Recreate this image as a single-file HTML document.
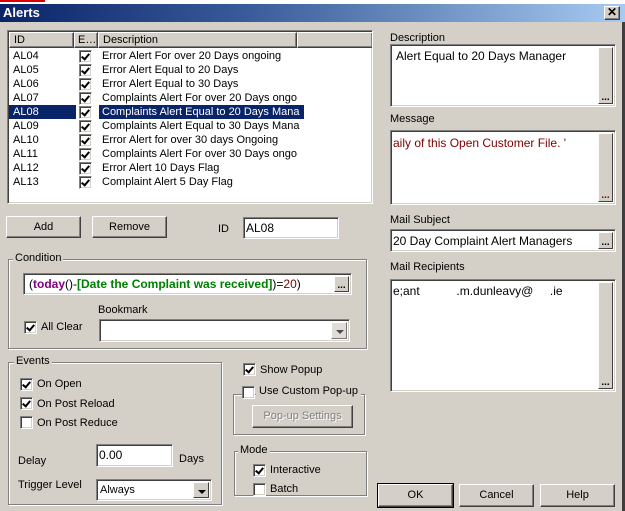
<!DOCTYPE html>
<html><head><style>
*{box-sizing:border-box}
body{margin:0;width:625px;height:511px;background:#d4d0c8;font-family:"Liberation Sans",sans-serif;font-size:11px;color:#000;position:relative;overflow:hidden}
.a{position:absolute}
.sunk{background:#fff;border:1px solid;border-color:#808080 #fff #fff #808080;box-shadow:inset 1px 1px 0 #404040,inset -1px -1px 0 #d4d0c8}
.btn{background:#d4d0c8;border:1px solid;border-color:#fff #404040 #404040 #fff;box-shadow:inset -1px -1px 0 #808080;text-align:center}
.grp{border:1px solid #808080;box-shadow:1px 1px 0 #fff,inset 1px 1px 0 #fff}
.lg{background:#d4d0c8;padding:0 2px;position:absolute;top:-8px;left:6px}
.cb{width:13px;height:13px;background:#fff;border:1px solid;border-color:#808080 #fff #fff #808080;box-shadow:inset 1px 1px 0 #404040,inset -1px -1px 0 #d4d0c8;position:absolute}
.cb.on::after{content:"";position:absolute;left:3px;top:1px;width:3px;height:6px;border:solid #000;border-width:0 2px 2px 0;transform:rotate(40deg)}
.dots{position:absolute;right:2px;top:2px;bottom:2px;width:15px;background:#d4d0c8;border:1px solid;border-color:#fff #404040 #404040 #fff;font-weight:bold;font-size:10px;text-align:center;display:flex;align-items:flex-end;justify-content:center;line-height:8px;padding-bottom:1px}
.row{position:absolute;left:0;height:14px;line-height:14px;width:364px}
.arrow{position:absolute;right:2px;top:2px;bottom:2px;width:16px;background:#d4d0c8;border:1px solid;border-color:#fff #404040 #404040 #fff}
.arrow::after{content:"";position:absolute;left:4px;top:7px;border:4px solid transparent;border-top:4px solid #000;border-bottom:0}
.txt{font-family:"Liberation Sans",sans-serif;font-size:12px}
</style></head><body>
<div class="a" style="left:0;top:0;width:625px;height:4px;background:#fff"></div>
<div class="a" style="left:0;top:0;width:45px;height:2px;background:#d00"></div>
<div class="a" style="left:0;top:4px;width:625px;height:18px;background:linear-gradient(90deg,#0a246a 0%,#3a5c9a 40%,#a6caf0 100%);color:#fff;font-weight:bold;font-size:13px;line-height:18px;padding-left:3px">Alerts</div>
<div class="a btn" style="left:604px;top:6px;width:16px;height:14px;font-weight:bold;font-size:12px;line-height:11px">✕</div>
<div class="a" style="left:622px;top:22px;width:3px;height:489px;background:#404040"></div>

<!-- list -->
<div class="a sunk" style="left:7px;top:30px;width:366px;height:174px;overflow:hidden">
 <div class="a" style="left:1px;top:1px;width:364px;height:16px;background:#d4d0c8">
  <div class="a btn" style="left:0;top:0;width:65px;height:16px;text-align:left;padding-left:4px;line-height:14px">ID</div>
  <div class="a btn" style="left:65px;top:0;width:24px;height:16px;text-align:left;padding-left:3px;line-height:14px">E…</div>
  <div class="a btn" style="left:89px;top:0;width:199px;height:16px;text-align:left;padding-left:4px;line-height:14px">Description</div>
  <div class="a btn" style="left:288px;top:0;width:76px;height:16px"></div>
 </div>
 <div class="a" style="left:1px;top:18px;width:364px;height:155px">
  <div class="row" style="top:0"><span class="a" style="left:4px">AL04</span><span class="cb on" style="left:70px;top:1px"></span><span class="a" style="left:93px">Error Alert For over 20 Days ongoing</span></div>
  <div class="row" style="top:14px"><span class="a" style="left:4px">AL05</span><span class="cb on" style="left:70px;top:1px"></span><span class="a" style="left:93px">Error Alert Equal to 20 Days</span></div>
  <div class="row" style="top:28px"><span class="a" style="left:4px">AL06</span><span class="cb on" style="left:70px;top:1px"></span><span class="a" style="left:93px">Error Alert Equal to 30 Days</span></div>
  <div class="row" style="top:42px"><span class="a" style="left:4px">AL07</span><span class="cb on" style="left:70px;top:1px"></span><span class="a" style="left:93px">Complaints Alert For over 20 Days ongo</span></div>
  <div class="row" style="top:56px"><span class="a" style="left:0;width:67px;height:14px;background:#0a246a;color:#fff;padding-left:4px">AL08</span><span class="cb on" style="left:70px;top:1px"></span><span class="a" style="left:90px;width:205px;height:14px;background:#0a246a;color:#fff;padding-left:3px">Complaints Alert Equal to 20 Days Mana</span></div>
  <div class="row" style="top:70px"><span class="a" style="left:4px">AL09</span><span class="cb on" style="left:70px;top:1px"></span><span class="a" style="left:93px">Complaints Alert Equal to 30 Days Mana</span></div>
  <div class="row" style="top:84px"><span class="a" style="left:4px">AL10</span><span class="cb on" style="left:70px;top:1px"></span><span class="a" style="left:93px">Error Alert for over 30 days Ongoing</span></div>
  <div class="row" style="top:98px"><span class="a" style="left:4px">AL11</span><span class="cb on" style="left:70px;top:1px"></span><span class="a" style="left:93px">Complaints Alert For over 30 Days ongo</span></div>
  <div class="row" style="top:112px"><span class="a" style="left:4px">AL12</span><span class="cb on" style="left:70px;top:1px"></span><span class="a" style="left:93px">Error Alert 10 Days Flag</span></div>
  <div class="row" style="top:126px"><span class="a" style="left:4px">AL13</span><span class="cb on" style="left:70px;top:1px"></span><span class="a" style="left:93px">Complaint Alert 5 Day Flag</span></div>
 </div>
</div>

<div class="a btn" style="left:6px;top:216px;width:75px;height:22px;line-height:20px">Add</div>
<div class="a btn" style="left:92px;top:216px;width:75px;height:22px;line-height:20px">Remove</div>
<div class="a" style="left:218px;top:223px">ID</div>
<div class="a sunk" style="left:243px;top:217px;width:96px;height:22px;padding:3px 0 0 2px;font-size:12px">AL08</div>

<!-- condition -->
<div class="a grp" style="left:8px;top:259px;width:359px;height:90px"><span class="lg" style="left:4px">Condition</span></div>
<div class="a sunk" style="left:23px;top:273px;width:329px;height:22px;padding:3px 0 0 5px;font-size:12px"><span>(</span><b style="color:#800080">today</b><span>()-</span><b style="color:#008000">[Date the Complaint was received]</b><span>)=</span><span style="color:#800000">20</span><span>)</span><div class="dots" style="top:2px">...</div></div>
<div class="a" style="left:98px;top:304px">Bookmark</div>
<div class="a sunk" style="left:99px;top:319px;width:251px;height:23px"><div class="arrow" style="opacity:.7"></div></div>
<span class="cb on" style="left:24px;top:321px"></span>
<div class="a" style="left:41px;top:321px">All Clear</div>

<!-- events -->
<div class="a grp" style="left:8px;top:362px;width:214px;height:143px"><span class="lg" style="left:5px">Events</span></div>
<span class="cb on" style="left:20px;top:378px"></span><div class="a" style="left:37px;top:378px">On Open</div>
<span class="cb on" style="left:20px;top:397px"></span><div class="a" style="left:37px;top:398px">On Post Reload</div>
<span class="cb" style="left:20px;top:416px"></span><div class="a" style="left:37px;top:417px">On Post Reduce</div>
<div class="a" style="left:18px;top:455px">Delay</div>
<div class="a sunk" style="left:96px;top:444px;width:77px;height:23px;padding:3px 0 0 2px;font-size:12px">0.00</div>
<div class="a" style="left:179px;top:453px">Days</div>
<div class="a" style="left:18px;top:479px">Trigger Level</div>
<div class="a sunk" style="left:96px;top:479px;width:116px;height:22px;padding:4px 0 0 3px;font-size:11px">Always<div class="arrow"></div></div>

<!-- popup -->
<span class="cb on" style="left:243px;top:363px"></span><div class="a" style="left:260px;top:364px">Show Popup</div>
<div class="a grp" style="left:233px;top:394px;width:132px;height:41px"></div>
<span class="cb" style="left:242px;top:386px"></span><div class="a" style="left:256px;top:385px;background:#d4d0c8;padding:0 3px">Use Custom Pop-up</div>
<div class="a btn" style="left:252px;top:405px;width:101px;height:23px;line-height:21px;color:#808080;text-shadow:1px 1px 0 #fff">Pop-up Settings</div>

<!-- mode -->
<div class="a grp" style="left:234px;top:451px;width:133px;height:45px"><span class="lg" style="left:3px">Mode</span></div>
<span class="cb on" style="left:253px;top:464px"></span><div class="a" style="left:270px;top:464px">Interactive</div>
<span class="cb" style="left:253px;top:483px"></span><div class="a" style="left:270px;top:483px">Batch</div>

<!-- right -->
<div class="a" style="left:390px;top:32px">Description</div>
<div class="a sunk txt" style="left:390px;top:44px;width:226px;height:63px;padding:4px 0 0 5px">Alert Equal to 20 Days Manager<div class="dots">...</div></div>
<div class="a" style="left:390px;top:113px">Message</div>
<div class="a sunk txt" style="left:390px;top:130px;width:226px;height:75px;padding:5px 0 0 2px;color:#800000">aily of this Open Customer File. '<div class="dots">...</div></div>
<div class="a" style="left:390px;top:214px">Mail Subject</div>
<div class="a sunk txt" style="left:390px;top:229px;width:226px;height:23px;padding:4px 0 0 2px">20 Day Complaint Alert Managers<div class="dots">...</div></div>
<div class="a" style="left:390px;top:261px">Mail Recipients</div>
<div class="a sunk txt" style="left:390px;top:279px;width:226px;height:113px;padding:4px 0 0 2px">e;ant&nbsp;&nbsp;&nbsp;&nbsp;&nbsp;&nbsp;&nbsp;&nbsp;&nbsp;&nbsp;&nbsp;.m.dunleavy@&nbsp;&nbsp;&nbsp;&nbsp;&nbsp;.ie<div class="dots">...</div></div>

<div class="a btn" style="left:378px;top:484px;width:75px;height:23px;line-height:21px;outline:1px solid #000">OK</div>
<div class="a btn" style="left:459px;top:484px;width:75px;height:23px;line-height:21px">Cancel</div>
<div class="a btn" style="left:540px;top:484px;width:75px;height:23px;line-height:21px">Help</div>
</body></html>
